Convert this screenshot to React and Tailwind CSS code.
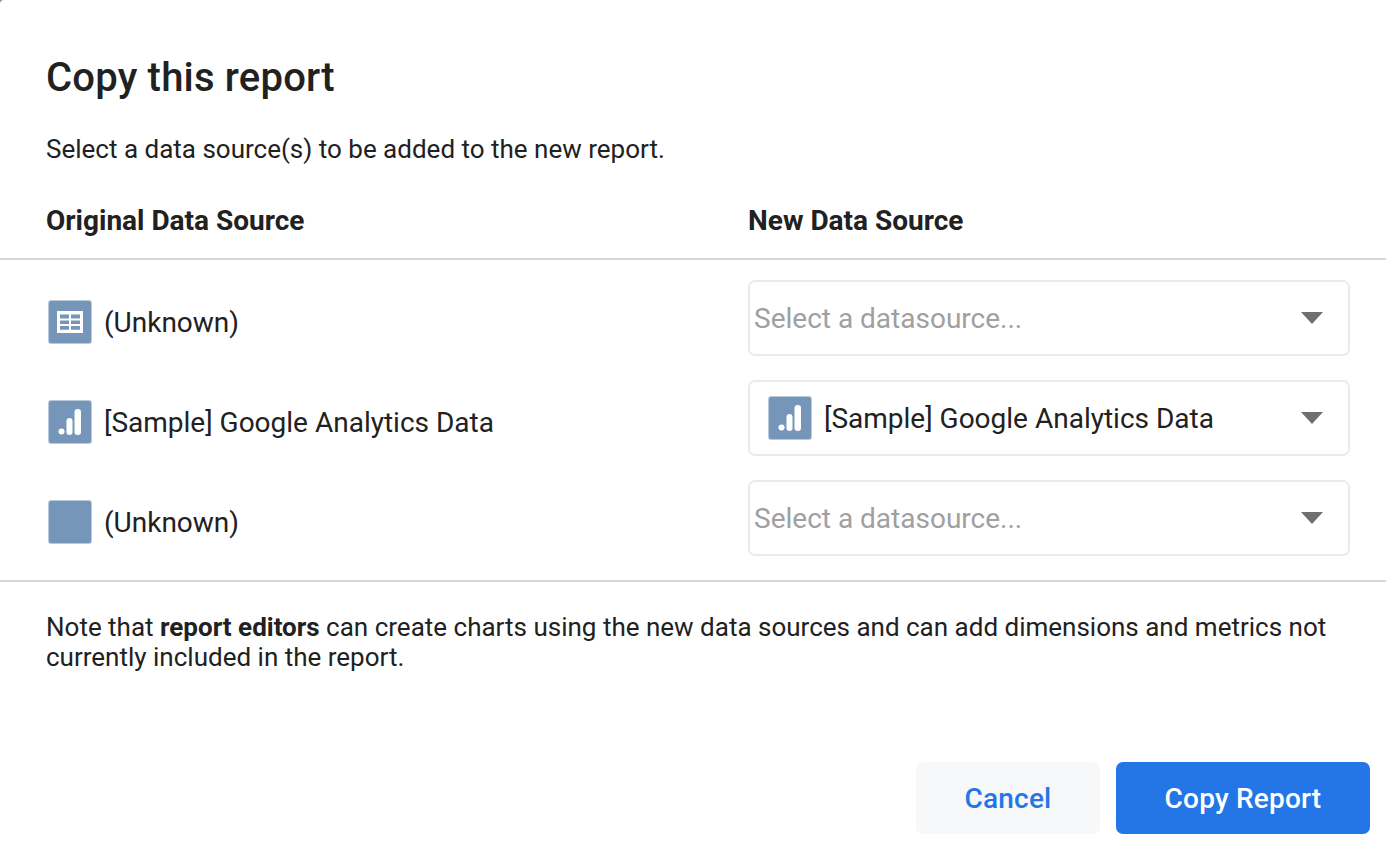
import { useState } from 'react';

const TableIcon = () => (
  <div className="w-11 h-11 rounded-[3px] bg-[#7596b8] border border-[#b9cadb] flex items-center justify-center shrink-0">
    <svg width="26" height="22" viewBox="0 0 26 22" fill="none">
      <path d="M0 0H26V22H0Z" fill="white" />
      <path d="M3 3.5H12V7.5H3ZM14 3.5H23V7.5H14ZM3 9.5H12V13H3ZM14 9.5H23V13H14ZM3 15H12V18.8H3ZM14 15H23V18.8H14Z" fill="#7596b8" />
    </svg>
  </div>
);

const BarsIcon = () => (
  <div className="w-11 h-11 rounded-[3px] bg-[#7596b8] border border-[#b9cadb] flex items-center justify-center shrink-0">
    <svg width="24" height="26" viewBox="0 0 24 26" fill="white">
      <circle cx="3.5" cy="22.5" r="3" />
      <rect x="8.5" y="9" width="6" height="17" rx="3" />
      <rect x="16.5" y="0" width="6.5" height="26" rx="3" />
    </svg>
  </div>
);

const BlankIcon = () => (
  <div className="w-11 h-11 rounded-[3px] bg-[#7596b8] border border-[#b9cadb] shrink-0" />
);

function DataSelect({ value, icon }) {
  return (
    <div className="h-[76px] w-[602px] border-2 border-[#ebebeb] rounded-[7px] flex items-center justify-between pl-[4px] pr-[25px] bg-white">
      {value ? (
        <div className="flex items-center gap-3 pl-[14px]">
          {icon}
          <span className="text-[#212121] mt-[2px]">{value}</span>
        </div>
      ) : (
        <span className="text-[#a0a0a0] mt-[2px]">Select a datasource...</span>
      )}
      <svg width="22" height="12" viewBox="0 0 22 12" fill="#6f6f6f">
        <path d="M0 0H22L11 12Z" />
      </svg>
    </div>
  );
}

function Row({ icon, name, select }) {
  return (
    <div className="flex items-center h-[100px] pl-[48px]">
      <div className="w-[700px] flex items-center gap-3 pt-2">
        {icon}
        <span className="mt-[2px]">{name}</span>
      </div>
      {select}
    </div>
  );
}

export default function App() {
  const [rows] = useState([
    { icon: <TableIcon />, name: '(Unknown)', select: <DataSelect /> },
    { icon: <BarsIcon />, name: '[Sample] Google Analytics Data', select: <DataSelect value="[Sample] Google Analytics Data" icon={<BarsIcon />} /> },
    { icon: <BlankIcon />, name: '(Unknown)', select: <DataSelect /> },
  ]);

  return (
    <div className="w-[1386px] h-[850px] bg-[#8a8a8a] overflow-hidden">
      <div className="w-full h-full rounded-tl-[4px] bg-white text-[#212121] text-[26px] leading-[30px] font-['Roboto',sans-serif] flex flex-col">
        <h1 className="pt-[56px] pl-[46px] text-[40px] leading-[44px] font-medium tracking-[0.2px]">Copy this report</h1>
        <p className="pt-[34px] pl-[46px]">Select a data source(s) to be added to the new report.</p>
        <div className="flex pt-[42px] pl-[46px] pb-[22px] text-[28px] font-bold border-b-2 border-[#d6d6d6]">
          <div className="w-[702px]">Original Data Source</div>
          <div>New Data Source</div>
        </div>
        <div className="pt-[8px] pb-[12px] text-[28px] border-b-2 border-[#d6d6d6]">
          {rows.map((row, i) => (
            <Row key={i} icon={row.icon} name={row.name} select={row.select} />
          ))}
        </div>
        <p className="pt-[30px] pl-[46px] pr-[40px]">
          Note that <b>report editors</b> can create charts using the new data sources and can add dimensions and metrics not currently included in the report.
        </p>
        <div className="flex justify-end gap-4 mt-auto mb-[16px] pr-4 text-[28px] tracking-[0.2px]">
          <button className="h-[72px] w-[184px] pt-[2px] rounded-[7px] bg-[#f7f8fa] text-[#2476e6] font-medium">Cancel</button>
          <button className="h-[72px] w-[254px] pt-[2px] rounded-[7px] bg-[#2476e6] text-white font-medium">Copy Report</button>
        </div>
      </div>
    </div>
  );
}
